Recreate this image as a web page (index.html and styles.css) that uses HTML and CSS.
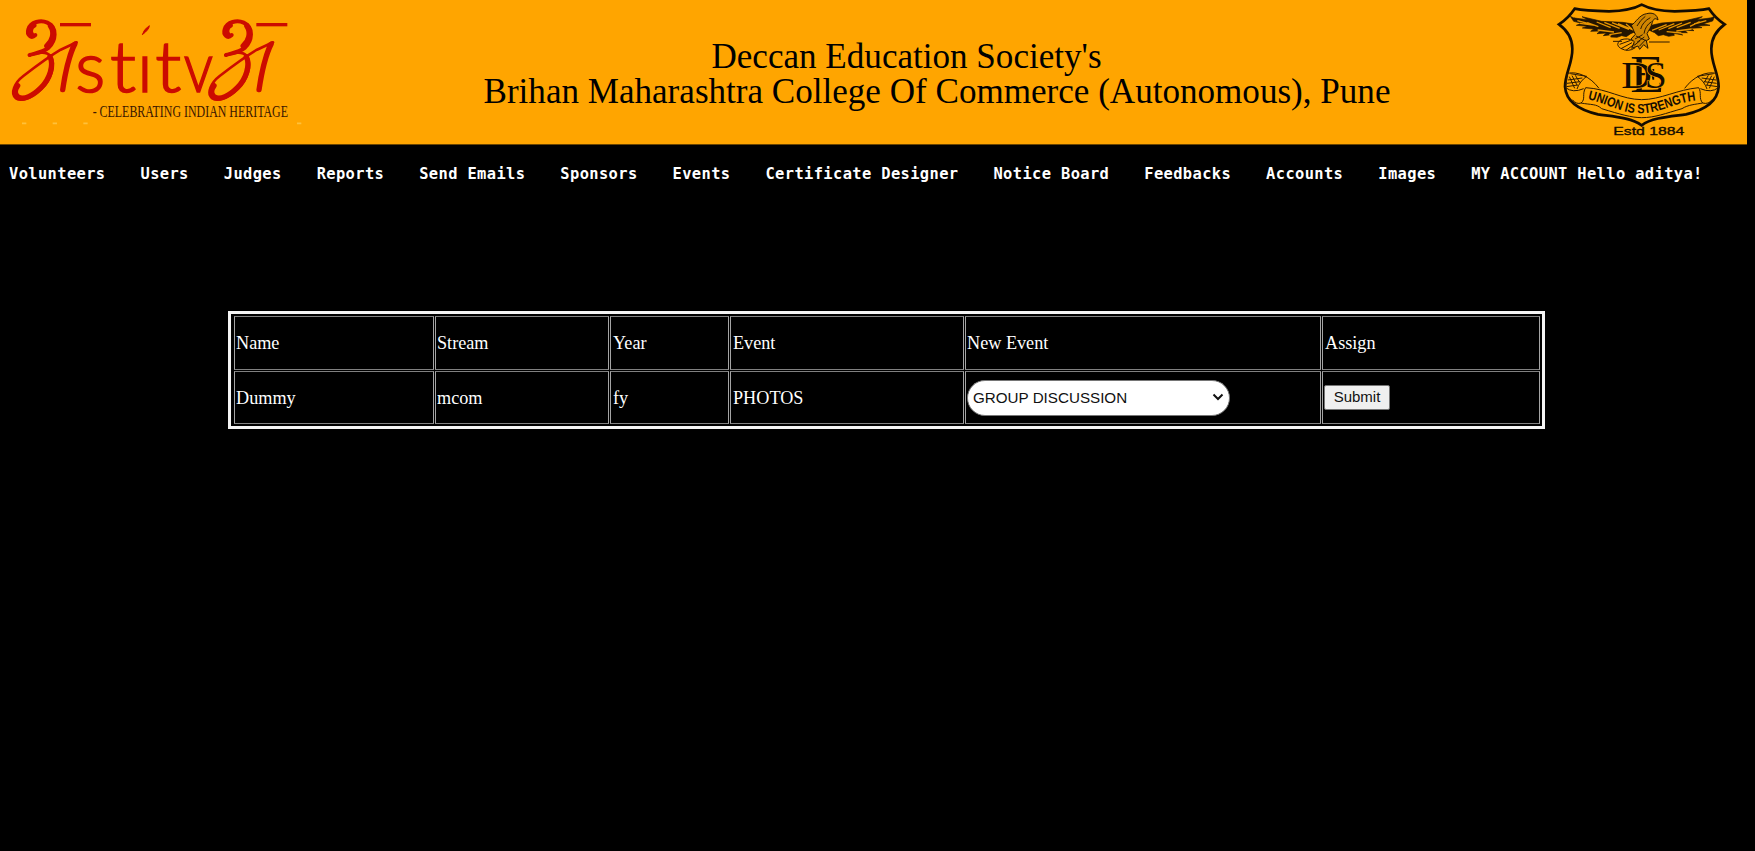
FILE: index.html
```html
<!DOCTYPE html>
<html lang="en">
<head>
<meta charset="utf-8">
<title>Volunteers</title>
<link rel="stylesheet" href="styles.css">
</head>
<body>
<header class="banner">
  <svg class="logo" viewBox="0 0 930 435" role="img" aria-label="Astitva">
    <defs>
      <g id="a" fill="none" stroke="#cc0b00" stroke-linecap="round" stroke-linejoin="round">
        <path stroke-width="12" d="M106 105C93 118 80 104 85 88C92 65 123 59 142 68C174 83 167 123 146 143C127 158 105 160 89 165"/>
        <path stroke-width="17" d="M94 104C86 93 93 80 101 76M152 78C166 99 157 125 141 138"/>
        <path stroke-width="8" d="M87 166C111 159 138 151 151 168C169 194 153 239 124 267C98 291 66 307 48 295C29 280 45 247 70 228C105 201 145 171 182 149L230 127"/>
        <path stroke-width="16" d="M150 170C162 195 150 237 123 263C100 286 71 303 53 290C42 280 46 267 53 257"/>
        <path stroke-width="14" d="M226 131C213 157 197 215 189 270M221 134C208 166 194 219 187 270"/>
        <path stroke-width="10" stroke-linecap="butt" d="M180 74H273"/>
      </g>
    </defs>
    <use href="#a"/>
    <use href="#a" x="589"/>
    <g class="logo-word">
      <text x="226" y="275" textLength="90" lengthAdjust="spacingAndGlyphs">s</text>
      <text x="330" y="275" textLength="78" lengthAdjust="spacingAndGlyphs">t</text>
      <text x="411" y="275">ı</text>
      <text x="466" y="275" textLength="78" lengthAdjust="spacingAndGlyphs">t</text>
      <text x="551" y="275" textLength="88" lengthAdjust="spacingAndGlyphs">v</text>
    </g>
    <path d="M427 104Q431 88 448 77Q448 88 427 104Z" fill="#cc0b00" stroke="#cc0b00" stroke-width="3"/>
    <text class="logo-tag" x="278" y="352" textLength="586" lengthAdjust="spacingAndGlyphs">- CELEBRATING INDIAN HERITAGE</text>
    <path d="M66 370h13M158 370h13M250 370h13M891 370h13" stroke="#ffc13a" stroke-width="5"/>
  </svg>
  <h1 class="title">
    <span class="title-society">Deccan Education Society's</span>
    <span class="title-college">Brihan Maharashtra College Of Commerce (Autonomous), Pune</span>
  </h1>
  <svg class="crest" viewBox="0 0 621 435" role="img" aria-label="Union is Strength">
    <path class="shield" d="M305 14C282 27 250 33 207 34C169 33 133 32 104 26C91 46 75 61 57 73C83 92 97 116 97 146C98 188 75 222 75 260C78 303 116 330 174 343C223 350 274 353 305 376C336 353 387 350 438 343C496 330 533 303 536 260C536 222 513 188 514 146C514 116 528 92 554 73C536 61 520 46 507 26C478 32 442 33 404 34C361 33 329 27 305 14Z"/>
    <g class="ink">
      <path d="M91 49L112 59 102 54 143 59 126 50 185 64 248 67 286 73 298 90 272 101 259 110 245 107 231 112 212 111 215 104 190 107 199 99 171 101 181 93 152 94 161 87 127 84 142 79 109 76 125 70 101 64Z"/>
      <path d="M524 49L501 59 511 54 470 59 487 50 428 64 365 69 334 76 326 90 344 98 355 107 370 104 386 109 403 106 401 100 428 105 415 98 442 98 434 91 462 92 452 85 486 83 473 78 510 76 490 71 518 63Z"/>
    </g>
    <g class="feather">
      <path d="M112 62L150 72M120 70L165 76M142 68L175 80M170 66L212 83M193 67L239 85M216 68L267 88M173 90L222 96M208 104L245 98M234 71L283 91M258 72L290 98M499 62L462 72M479 65L450 79M452 67L410 83M426 69L385 86M403 71L356 90M455 87L409 93M424 99L380 95M380 74L336 91"/>
    </g>
    <path class="body" d="M274 76C288 67 298 44 320 41C339 36 352 44 354 60C346 53 340 56 337 67C334 81 326 91 321 101L328 117 319 122 324 145 311 134 299 148 294 138 275 145 283 125 273 117 286 103Z"/>
    <path class="thin" d="M291 78Q301 60 316 49M302 87Q308 65 331 53M312 101Q316 76 335 65M285 117L308 104M291 127L313 111M298 139L317 119M288 108L318 122M283 136L300 122M241 120Q265 112 279 123M242 120Q224 134 242 145Q265 158 286 143M239 133L272 121M243 146L276 128M258 151L284 132M327 126H389M219 124H246"/>
    <g class="monogram">
      <text x="271" y="275" font-size="158" textLength="102" lengthAdjust="spacingAndGlyphs">E</text>
      <text x="244" y="263" font-size="114" textLength="92" lengthAdjust="spacingAndGlyphs">D</text>
      <text x="314" y="263" font-size="112" textLength="66" lengthAdjust="spacingAndGlyphs">S</text>
    </g>
    <g class="thin">
      <path d="M82 220C113 213 151 230 177 265M82 220L77 263Q98 280 131 266M91 221L140 229Q119 244 111 267M137 263C125 282 138 298 123 309Q110 314 98 300M123 309C154 315 169 311 185 326C240 343 276 353 305 353C345 353 377 340 426 326C444 314 468 313 488 309Q506 314 516 299M488 309C475 295 486 278 476 263M137 263C206 267 243 298 305 299C362 299 411 269 476 263M529 220C498 213 460 230 434 265M529 220L535 263Q514 280 481 266M521 221L472 229Q493 244 501 267"/>
      <path d="M88 230L104 265M96 227L112 257M106 226L119 247M83 240L127 234M81 250L120 245M79 260L113 255M523 230L508 265M515 227L500 257M505 226L493 247M528 240L485 234M530 250L492 245M533 260L499 255"/>
    </g>
    <path id="motto-line" d="M143 298C200 309 240 341 305 340C365 338 414 304 473 301" fill="none"/>
    <text class="motto"><textPath href="#motto-line" textLength="336" lengthAdjust="spacingAndGlyphs">UNION IS STRENGTH</textPath></text>
    <text class="estd" x="220" y="406" textLength="213" lengthAdjust="spacingAndGlyphs">Estd 1884</text>
  </svg>
</header>
<nav class="menu">
  <a>Volunteers</a><a>Users</a><a>Judges</a><a>Reports</a><a>Send Emails</a><a>Sponsors</a><a>Events</a><a>Certificate Designer</a><a>Notice Board</a><a>Feedbacks</a><a>Accounts</a><a>Images</a><a>MY ACCOUNT Hello aditya!</a>
</nav>
<main class="assign">
  <div class="cell">Name</div><div class="cell">Stream</div><div class="cell inset">Year</div><div class="cell inset">Event</div><div class="cell">New Event</div><div class="cell inset">Assign</div>
  <div class="cell low">Dummy</div><div class="cell low">mcom</div><div class="cell inset low">fy</div><div class="cell inset low">PHOTOS</div>
  <div class="cell">
    <div class="select"><span>GROUP DISCUSSION</span><svg class="chevron" viewBox="0 0 12 8"><path d="M1.5 1.5L6 6L10.500 1.500"/></svg></div>
  </div>
  <div class="cell"><button class="submit">Submit</button></div>
</main>
</body>
</html>
```
FILE: styles.css
```css
* { box-sizing: border-box; }
body {
  margin: 0;
  background: #000;
  color: #fff;
  font-family: "Liberation Serif", "Times New Roman", serif;
  font-size: 18.200px;
}
.banner {
  display: flex;
  width: 1747px;
  height: 145px;
  border-bottom: 1px solid #6b4500;
  background: #ffa500;
  color: #000;
}
.logo { width: 310px; height: 145px; flex: none; }
.logo-word text {
  font-family: Lato, sans-serif;
  font-size: 212px;
  font-weight: 300;
  fill: #cc0b00;
  stroke: #cc0b00;
  stroke-width: 5;
}
.logo-tag {
  font-family: "Liberation Serif", serif;
  font-size: 47px;
  fill: #3b1700;
}
.title {
  flex: 1;
  margin: 0;
  padding: 39px 0 0 24px;
  font-size: 35.100px;
  line-height: 35px;
  font-weight: 400;
  text-align: center;
  white-space: nowrap;
}
.title span { display: block; }
.title-society { padding-right: 61px; }
.crest { width: 207px; height: 145px; flex: none; }
.shield { fill: none; stroke: #150c00; stroke-width: 8; }
.ink { fill: #241500; stroke: #241500; stroke-width: 2; }
.feather { fill: none; stroke: #e89600; stroke-width: 4; }
.body { fill: #d08600; stroke: #241500; stroke-width: 3; }
.thin { fill: none; stroke: #2c1900; stroke-width: 3; }
.monogram {
  font-family: "Liberation Serif", serif;
  fill: #150c00;
  stroke: #ffa500;
  stroke-width: 4;
  paint-order: stroke;
}
.motto {
  font-family: "Liberation Sans", sans-serif;
  font-weight: 700;
  font-size: 40px;
  fill: #150c00;
}
.estd {
  font-family: "Liberation Sans", sans-serif;
  font-size: 34px;
  fill: #150c00;
  stroke: #150c00;
  stroke-width: 1;
}
.menu {
  display: flex;
  gap: 35px;
  height: 58px;
  padding-left: 9px;
  align-items: center;
  font: 700 15.400px "DejaVu Sans Mono", monospace;
  letter-spacing: 0.383px;
  white-space: nowrap;
}
.assign {
  display: grid;
  grid-template-columns: 200px 174px 119px 234px 356px 218px;
  grid-template-rows: 54px 53px;
  gap: 1px;
  width: 1317px;
  margin: 108px 0 0 228px;
  padding: 2px;
  padding-left: 3px;
  border: 3px solid #f4f4f4;
}
.cell {
  display: flex;
  align-items: center;
  padding-left: 1px;
  border: 1px solid #a4a4a4;
  border-top-color: #808080;
  border-bottom-color: #808080;
}
.inset { padding-left: 2px; }
.low { padding-top: 2px; }
.select {
  display: flex;
  align-items: center;
  justify-content: space-between;
  width: 263px;
  height: 36px;
  padding: 0 5px 1px;
  border: 1px solid #767676;
  border-radius: 18px;
  background: #fff;
  color: #111;
  font: 15.200px "Liberation Sans", Arial, sans-serif;
}
.chevron { width: 12px; height: 8px; }
.chevron path { fill: none; stroke: #111; stroke-width: 2; }
.submit {
  width: 66px;
  height: 25px;
  margin: 0 0 1px;
  padding: 0 0 1px;
  border: 1px solid #767676;
  border-radius: 2px;
  background: #efefef;
  color: #111;
  font: 15px "Liberation Sans", Arial, sans-serif;
}
```
